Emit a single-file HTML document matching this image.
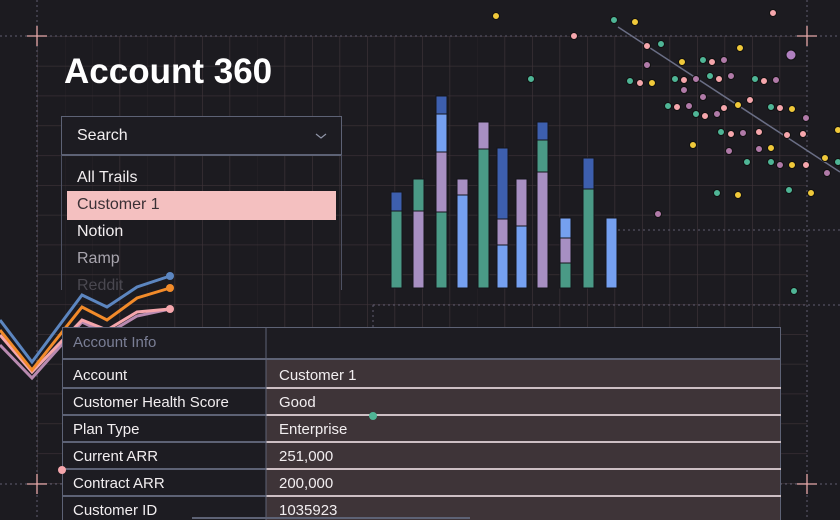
<!DOCTYPE html>
<html><head><meta charset="utf-8"><style>
*{margin:0;padding:0;box-sizing:border-box}
body{width:840px;height:520px;overflow:hidden;background:#1c1b20;font-family:"Liberation Sans",sans-serif;position:relative}
svg{position:absolute;left:0;top:0}
.t{position:absolute;color:#f2eef0;font-size:15px}
</style></head><body>
<svg width="840" height="520" viewBox="0 0 840 520">
<defs>
<pattern id="g" x="37" y="36" width="27.5" height="29.8" patternUnits="userSpaceOnUse">
<path d="M0 0H27.5M0 0V29.8" stroke="#3d3338" stroke-width="1.3" fill="none"/>
</pattern>
</defs>
<rect x="37" y="36" width="770" height="448" fill="url(#g)"/>
<g stroke="#5f5c70" stroke-width="1" stroke-dasharray="2 3" fill="none">
<path d="M0 36H840M0 484H840M37 0V520M807 0V520M618 230H840M373 305H840M373 305V520"/>
</g>
<g stroke="#e6a8a8" stroke-width="1.3">
<path d="M27 36H47M37 26V46M797 36H817M807 26V46M27 484H47M37 474V494M797 484H817M807 474V494"/>
</g>
<!-- bars -->
<g stroke="#15141a" stroke-width="1">
<rect x="391" y="192" width="11" height="19" fill="#3d5fae"/><rect x="391" y="211" width="11" height="77" fill="#4a9a86"/>
<rect x="413" y="179" width="11" height="32" fill="#4a9a86"/><rect x="413" y="211" width="11" height="77" fill="#a78fc2"/>
<rect x="436" y="96" width="11" height="18" fill="#3d5fae"/><rect x="436" y="114" width="11" height="38" fill="#75a0f0"/><rect x="436" y="152" width="11" height="60" fill="#a78fc2"/><rect x="436" y="212" width="11" height="76" fill="#4a9a86"/>
<rect x="457" y="179" width="11" height="16" fill="#a78fc2"/><rect x="457" y="195" width="11" height="93" fill="#75a0f0"/>
<rect x="478" y="122" width="11" height="27" fill="#a78fc2"/><rect x="478" y="149" width="11" height="139" fill="#4a9a86"/>
<rect x="497" y="148" width="11" height="71" fill="#3d5fae"/><rect x="497" y="219" width="11" height="26" fill="#a78fc2"/><rect x="497" y="245" width="11" height="43" fill="#75a0f0"/>
<rect x="516" y="179" width="11" height="47" fill="#a78fc2"/><rect x="516" y="226" width="11" height="62" fill="#75a0f0"/>
<rect x="537" y="122" width="11" height="18" fill="#3d5fae"/><rect x="537" y="140" width="11" height="32" fill="#4a9a86"/><rect x="537" y="172" width="11" height="116" fill="#a78fc2"/>
<rect x="560" y="218" width="11" height="20" fill="#75a0f0"/><rect x="560" y="238" width="11" height="25" fill="#a78fc2"/><rect x="560" y="263" width="11" height="25" fill="#4a9a86"/>
<rect x="583" y="158" width="11" height="31" fill="#3d5fae"/><rect x="583" y="189" width="11" height="99" fill="#4a9a86"/>
<rect x="606" y="218" width="11" height="70" fill="#75a0f0"/>
</g>
<!-- scatter -->
<path d="M618 27L840 172" stroke="#6a6e85" stroke-width="1.5"/>
<g stroke="#111" stroke-width="1">
<circle cx="496" cy="16" r="3.5" fill="#f0c93a"/><circle cx="531" cy="79" r="3.5" fill="#4fb596"/><circle cx="574" cy="36" r="3.5" fill="#f5a6ac"/>
<circle cx="614" cy="20" r="3.5" fill="#4fb596"/><circle cx="635" cy="22" r="3.5" fill="#f0c93a"/><circle cx="773" cy="13" r="3.5" fill="#f5a6ac"/>
<circle cx="647" cy="46" r="3.5" fill="#f5a6ac"/><circle cx="661" cy="44" r="3.5" fill="#4fb596"/><circle cx="740" cy="48" r="3.5" fill="#f0c93a"/><circle cx="791" cy="55" r="5" fill="#b080c0"/>
<circle cx="647" cy="65" r="3.5" fill="#b07aa8"/><circle cx="682" cy="62" r="3.5" fill="#f0c93a"/><circle cx="703" cy="60" r="3.5" fill="#4fb596"/><circle cx="712" cy="62" r="3.5" fill="#f5a6ac"/><circle cx="724" cy="60" r="3.5" fill="#b07aa8"/>
<circle cx="630" cy="81" r="3.5" fill="#4fb596"/><circle cx="640" cy="83" r="3.5" fill="#f5a6ac"/><circle cx="652" cy="83" r="3.5" fill="#f0c93a"/><circle cx="675" cy="79" r="3.5" fill="#4fb596"/><circle cx="684" cy="80" r="3.5" fill="#f5a6ac"/><circle cx="696" cy="79" r="3.5" fill="#b07aa8"/><circle cx="710" cy="76" r="3.5" fill="#4fb596"/><circle cx="719" cy="79" r="3.5" fill="#f5a6ac"/><circle cx="731" cy="76" r="3.5" fill="#b07aa8"/><circle cx="755" cy="79" r="3.5" fill="#4fb596"/><circle cx="764" cy="81" r="3.5" fill="#f5a6ac"/><circle cx="776" cy="80" r="3.5" fill="#b07aa8"/>
<circle cx="684" cy="90" r="3.5" fill="#b07aa8"/><circle cx="703" cy="97" r="3.5" fill="#b07aa8"/>
<circle cx="668" cy="106" r="3.5" fill="#4fb596"/><circle cx="677" cy="107" r="3.5" fill="#f5a6ac"/><circle cx="689" cy="106" r="3.5" fill="#b07aa8"/><circle cx="696" cy="114" r="3.5" fill="#4fb596"/><circle cx="705" cy="116" r="3.5" fill="#f5a6ac"/><circle cx="717" cy="114" r="3.5" fill="#b07aa8"/><circle cx="724" cy="108" r="3.5" fill="#f5a6ac"/><circle cx="738" cy="105" r="3.5" fill="#f0c93a"/><circle cx="750" cy="100" r="3.5" fill="#f5a6ac"/><circle cx="771" cy="107" r="3.5" fill="#4fb596"/><circle cx="780" cy="108" r="3.5" fill="#f5a6ac"/><circle cx="792" cy="109" r="3.5" fill="#f0c93a"/><circle cx="806" cy="118" r="3.5" fill="#b07aa8"/>
<circle cx="721" cy="132" r="3.5" fill="#4fb596"/><circle cx="731" cy="134" r="3.5" fill="#f5a6ac"/><circle cx="743" cy="133" r="3.5" fill="#b07aa8"/><circle cx="759" cy="132" r="3.5" fill="#f5a6ac"/><circle cx="787" cy="135" r="3.5" fill="#f5a6ac"/><circle cx="803" cy="134" r="3.5" fill="#f5a6ac"/><circle cx="838" cy="130" r="3.5" fill="#f0c93a"/>
<circle cx="693" cy="145" r="3.5" fill="#f0c93a"/><circle cx="729" cy="151" r="3.5" fill="#b07aa8"/><circle cx="759" cy="149" r="3.5" fill="#b07aa8"/><circle cx="771" cy="148" r="3.5" fill="#f0c93a"/>
<circle cx="747" cy="162" r="3.5" fill="#4fb596"/><circle cx="771" cy="162" r="3.5" fill="#4fb596"/><circle cx="780" cy="165" r="3.5" fill="#b07aa8"/><circle cx="792" cy="165" r="3.5" fill="#f0c93a"/><circle cx="806" cy="165" r="3.5" fill="#f5a6ac"/><circle cx="825" cy="158" r="3.5" fill="#f0c93a"/><circle cx="827" cy="173" r="3.5" fill="#b07aa8"/><circle cx="838" cy="162" r="3.5" fill="#4fb596"/>
<circle cx="717" cy="193" r="3.5" fill="#4fb596"/><circle cx="738" cy="195" r="3.5" fill="#f0c93a"/><circle cx="789" cy="190" r="3.5" fill="#4fb596"/><circle cx="811" cy="193" r="3.5" fill="#f0c93a"/><circle cx="658" cy="214" r="3.5" fill="#b07aa8"/>
<circle cx="794" cy="291" r="3.5" fill="#4fb596"/>
</g>
<!-- dropdown -->
<rect x="61.5" y="116.5" width="280" height="38" fill="#1d1c22" stroke="#5d6275"/>
<path d="M61.5 155V290M341.5 155V290" stroke="#4d5162"/>
<path d="M62 155H341" stroke="#5d6275" stroke-width="2"/>
<path d="M316 134l5 4 5-4" stroke="#9095a8" stroke-width="1.2" fill="none"/>
<rect x="67" y="191" width="269" height="29" fill="#f4c0c0"/>
<!-- line chart -->
<g fill="none" stroke-linejoin="miter" stroke-width="3">
<polyline points="0,345 32,378 82,322 107,334 137,316 170,309" stroke="#b88ab0"/>
<polyline points="0,335 32,372 82,320 107,330 137,312 170,309" stroke="#f5a6ac"/>
<polyline points="0,330 32,370 82,307 107,320 137,298 170,288" stroke="#f28b2a"/>
<polyline points="0,320 32,362 82,295 107,307 137,287 170,276" stroke="#5c86c0"/>
</g>
<circle cx="170" cy="276" r="4" fill="#5c86c0"/><circle cx="170" cy="288" r="4" fill="#f28b2a"/><circle cx="170" cy="309" r="4" fill="#f5a6ac"/>
<!-- table -->
<rect x="62.5" y="327.5" width="718" height="200" fill="#1d1c22" stroke="#5d6275"/>
<rect x="266" y="360" width="514" height="160" fill="#3e3438"/>
<path d="M62 359H781" stroke="#5d6275" stroke-width="2"/>
<path d="M266 327V520" stroke="#5d6275"/>
<g stroke-width="2">
<path d="M62 388H266M62 415H266M62 442H266M62 469H266M62 496H266" stroke="#5d6275"/>
<path d="M266 388H781M266 415H781M266 442H781M266 469H781M266 496H781" stroke="#cdbfc4"/>
</g>
<path d="M266 360V520" stroke="#5d6275"/>
<path d="M192 518H470" stroke="#5d6275" stroke-width="2"/>
<circle cx="373" cy="416" r="4" fill="#4fb596"/><circle cx="62" cy="470" r="4" fill="#f5a6ac"/>
</svg>
<div class="t" style="left:64px;top:52px;font-size:35px;font-weight:bold;color:#fff">Account 360</div>
<div class="t" style="left:77px;top:127px;font-size:16px">Search</div>
<div class="t" style="left:77px;top:169px;font-size:16px">All Trails</div>
<div class="t" style="left:77px;top:196px;font-size:16px;color:#3a3035">Customer 1</div>
<div class="t" style="left:77px;top:223px;font-size:16px">Notion</div>
<div class="t" style="left:77px;top:250px;font-size:16px;color:#a8a5ae">Ramp</div>
<div class="t" style="left:77px;top:277px;font-size:16px;color:#4a4850">Reddit</div>
<div class="t" style="left:73px;top:334px;color:#7a7e95">Account Info</div>
<div class="t" style="left:73px;top:367px">Account</div>
<div class="t" style="left:73px;top:394px">Customer Health Score</div>
<div class="t" style="left:73px;top:421px">Plan Type</div>
<div class="t" style="left:73px;top:448px">Current ARR</div>
<div class="t" style="left:73px;top:475px">Contract ARR</div>
<div class="t" style="left:73px;top:502px">Customer ID</div>
<div class="t" style="left:279px;top:367px">Customer 1</div>
<div class="t" style="left:279px;top:394px">Good</div>
<div class="t" style="left:279px;top:421px">Enterprise</div>
<div class="t" style="left:279px;top:448px">251,000</div>
<div class="t" style="left:279px;top:475px">200,000</div>
<div class="t" style="left:279px;top:502px">1035923</div>
</body></html>
